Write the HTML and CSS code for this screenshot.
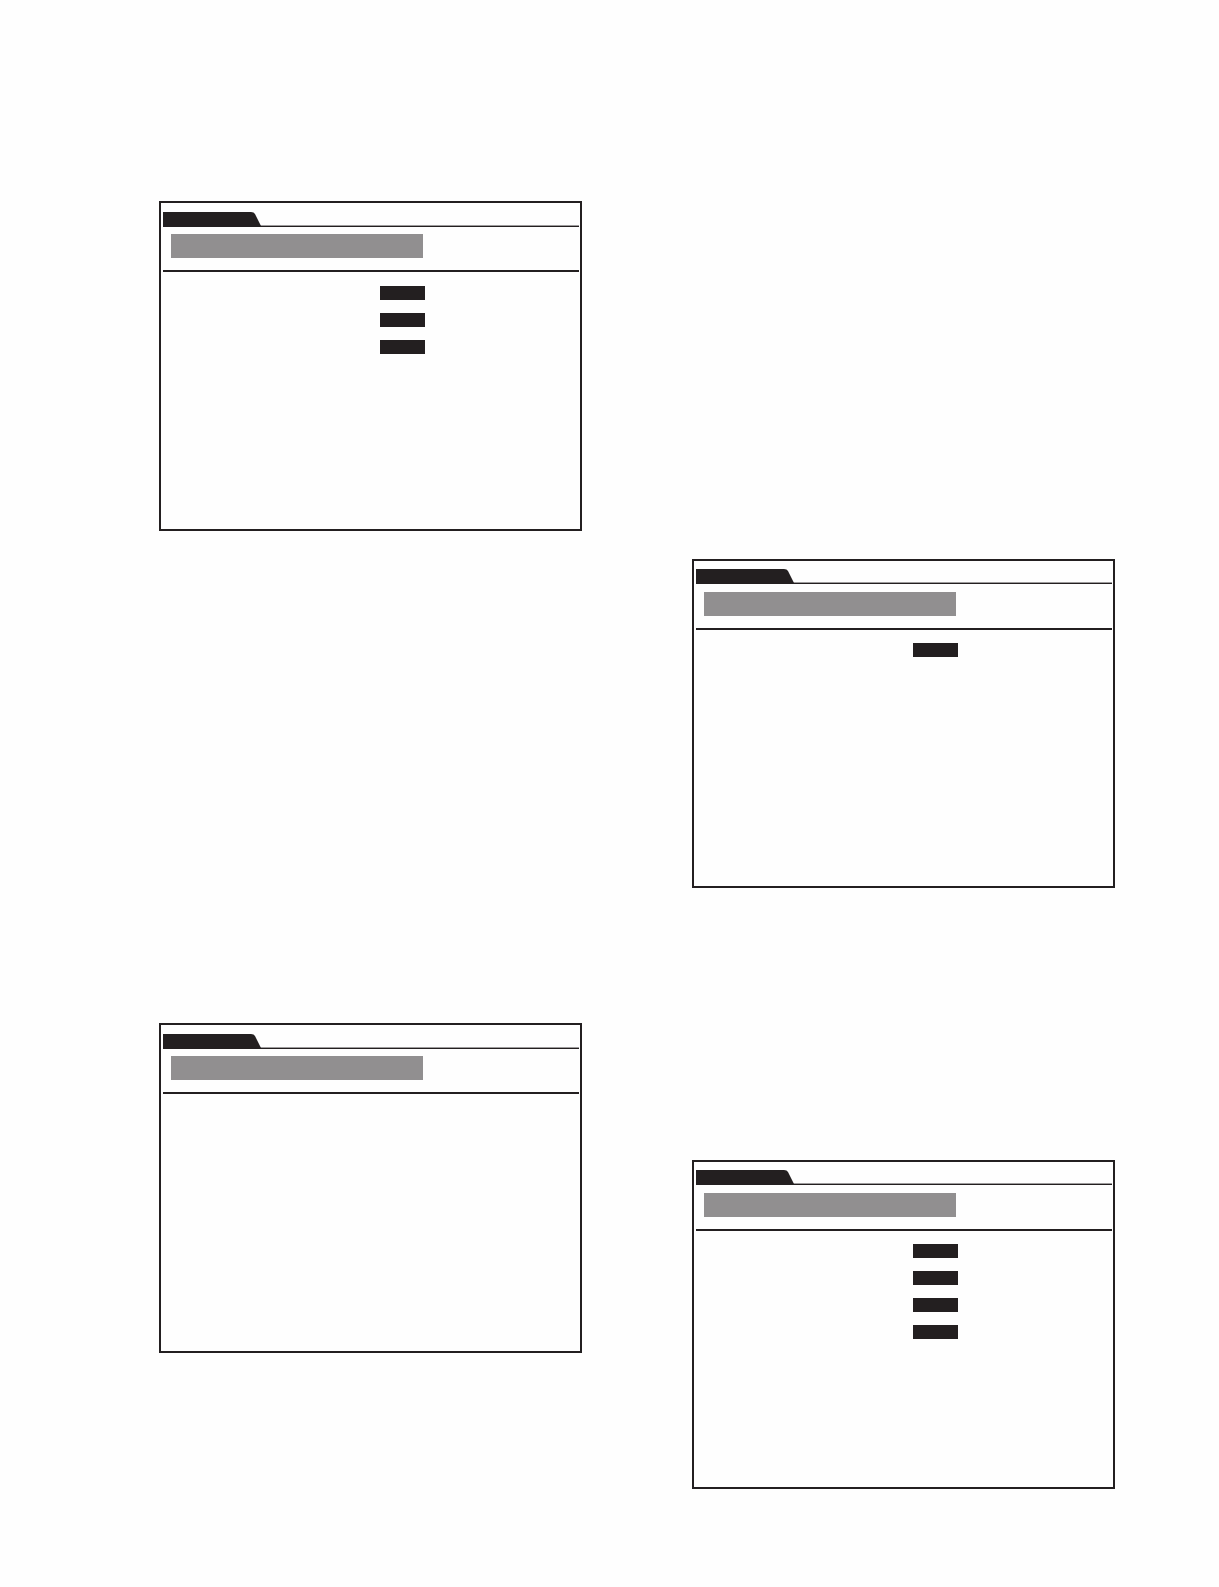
FILE: index.html
```html
<!DOCTYPE html>
<html lang="en">
<head>
    <meta charset="UTF-8">
    <meta name="viewport" content="width=device-width, initial-scale=1.0">
    <title>Menu screens</title>
    <link rel="stylesheet" href="styles.css">
</head>
<body>
    <main class="page">
        <div class="column column-left">
            <section class="screen">
                <div class="tab-bar">
                    <svg class="tab" viewBox="0 0 98 14"><path d="M0 0H88Q91 0 92 2L98 14H0Z"/></svg>
                </div>
                <div class="heading">
                    <div class="title-bar"></div>
                </div>
                <div class="values">
                    <div class="value"></div>
                    <div class="value"></div>
                    <div class="value"></div>
                </div>
            </section>

            <section class="screen">
                <div class="tab-bar">
                    <svg class="tab" viewBox="0 0 98 14"><path d="M0 0H88Q91 0 92 2L98 14H0Z"/></svg>
                </div>
                <div class="heading">
                    <div class="title-bar"></div>
                </div>
            </section>
        </div>

        <div class="column column-right">
            <section class="screen">
                <div class="tab-bar">
                    <svg class="tab" viewBox="0 0 98 14"><path d="M0 0H88Q91 0 92 2L98 14H0Z"/></svg>
                </div>
                <div class="heading">
                    <div class="title-bar"></div>
                </div>
                <div class="values">
                    <div class="value"></div>
                </div>
            </section>

            <section class="screen">
                <div class="tab-bar">
                    <svg class="tab" viewBox="0 0 98 14"><path d="M0 0H88Q91 0 92 2L98 14H0Z"/></svg>
                </div>
                <div class="heading">
                    <div class="title-bar"></div>
                </div>
                <div class="values">
                    <div class="value"></div>
                    <div class="value"></div>
                    <div class="value"></div>
                    <div class="value"></div>
                </div>
            </section>
        </div>
    </main>
</body>
</html>
```
FILE: styles.css
```css
* {
    box-sizing: border-box;
}
body {
    margin: 0;
    background-color: #fefefe;
    font-family: "Liberation Sans", Arial, sans-serif;
}
.page {
    display: grid;
    grid-template-columns: 1fr 1fr;
    column-gap: 110px;
    padding: 0 104px 98px 159px;
}
.column {
    display: flex;
    flex-direction: column;
}
.column-left {
    padding-top: 201px;
    gap: 492px;
}
.column-right {
    padding-top: 559px;
    gap: 272px;
}
.screen {
    min-height: 330px;
    padding: 9px 1px 0 2px;
    border: 2px solid #231f20;
}
.column-right .screen {
    min-height: 329px;
    padding-top: 8px;
}
/* thin double line running under the tab */
.tab-bar {
    border-bottom: 1px solid #231f20;
    box-shadow: inset 0 -1px #9d9b9c;
}
.tab {
    display: block;
    width: 98px;
    height: 14px;
    fill: #231f20;
}
.heading {
    padding: 7px 8px 12px;
    border-bottom: 2px solid #231f20;
}
.column-right .heading {
    padding-top: 8px;
}
.title-bar {
    width: 63%;
    height: 24px;
    background-color: #918f90;
}
.values {
    display: flex;
    flex-direction: column;
    gap: 13px;
    padding: 14px 0 14px 217px;
}
.column-right .values {
    padding-top: 13px;
}
.value {
    width: 45px;
    height: 14px;
    background-color: #231f20;
}
```
